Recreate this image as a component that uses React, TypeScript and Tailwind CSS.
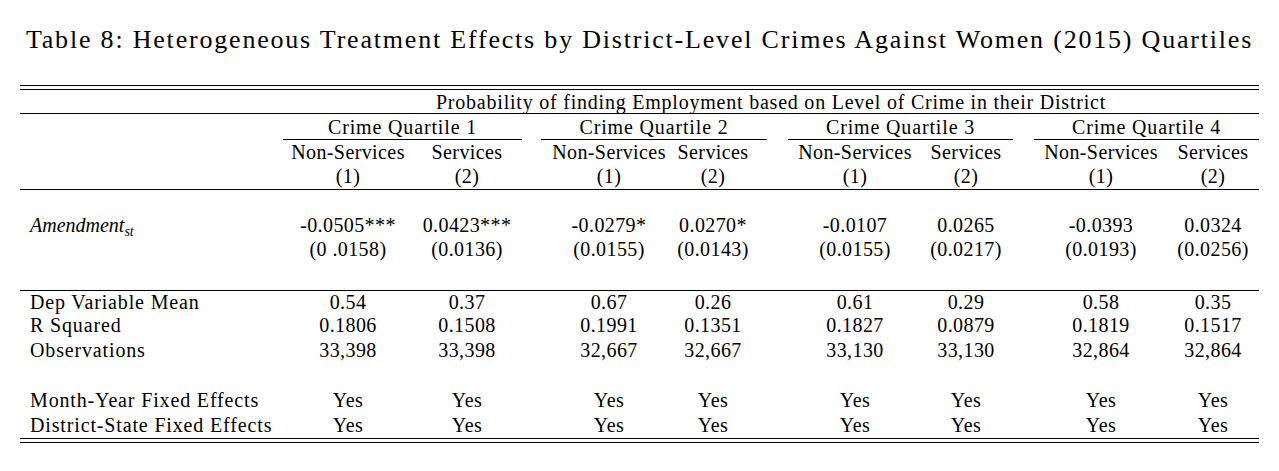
import React from "react";

const dataCols =
  "grid grid-cols-[263px_130px_108px_20px_136px_72px_39px_134px_88px_24px_134px_90px] items-center";

function Rule() {
  return <div className="h-px bg-black" />;
}

function Row({ label, values, className }: { label: React.ReactNode; values: React.ReactNode[]; className: string }) {
  const cells: React.ReactNode[] = [];
  values.forEach((v, i) => {
    cells.push(
      <div key={`v${i}`} className="text-center whitespace-nowrap">
        {v}
      </div>
    );
    if (i % 2 === 1 && i < 7) cells.push(<div key={`g${i}`} />);
  });
  return (
    <div className={`${dataCols} ${className}`}>
      <div className="pl-[10px] whitespace-nowrap tracking-[0.85px]">{label}</div>
      {cells}
    </div>
  );
}

const yes = ["Yes", "Yes", "Yes", "Yes", "Yes", "Yes", "Yes", "Yes"];

export default function App() {
  return (
    <div className="w-[1279px] h-[471px] bg-white text-black font-['Liberation_Serif','Times_New_Roman',serif] text-[20px] leading-[20px] tracking-[0.4px]">
      {/* Caption */}
      <h1 className="pt-[25px] h-[55px] text-center text-[26px] leading-[30px] tracking-[1.8px]">
        Table 8: Heterogeneous Treatment Effects by District-Level Crimes Against Women (2015) Quartiles
      </h1>

      {/* Table */}
      <div className="mx-[20px] mt-[30px]">
        <Rule />
        <div className="h-[3px]" />
        <Rule />

        <div className="grid grid-cols-[263px_1fr] h-[23px] items-center">
          <div />
          <div className="text-center whitespace-nowrap tracking-[0.78px]">
            Probability of finding Employment based on Level of Crime in their District
          </div>
        </div>
        <Rule />

        <div className="grid grid-cols-[263px_239px_19px_226px_21px_225px_21px_225px] h-[26px] tracking-[0.85px]">
          <div />
          <div className="flex items-center justify-center border-b border-black">Crime Quartile 1</div>
          <div />
          <div className="flex items-center justify-center border-b border-black">Crime Quartile 2</div>
          <div />
          <div className="flex items-center justify-center border-b border-black">Crime Quartile 3</div>
          <div />
          <div className="flex items-center justify-center border-b border-black">Crime Quartile 4</div>
        </div>

        <Row
          className="h-[23px]"
          label=""
          values={["Non-Services", "Services", "Non-Services", "Services", "Non-Services", "Services", "Non-Services", "Services"]}
        />
        <Row className="h-[26px]" label="" values={["(1)", "(2)", "(1)", "(2)", "(1)", "(2)", "(1)", "(2)"]} />
        <Rule />

        <div className="h-[23px]" />
        <Row
          className="h-[24px]"
          label={
            <span className="italic tracking-normal">
              Amendment<sub className="text-[14px]">st</sub>
            </span>
          }
          values={["-0.0505***", "0.0423***", "-0.0279*", "0.0270*", "-0.0107", "0.0265", "-0.0393", "0.0324"]}
        />
        <Row
          className="h-[24px]"
          label=""
          values={["(0 .0158)", "(0.0136)", "(0.0155)", "(0.0143)", "(0.0155)", "(0.0217)", "(0.0193)", "(0.0256)"]}
        />
        <div className="h-[29px]" />
        <Rule />

        <Row className="h-[21px]" label="Dep Variable Mean" values={["0.54", "0.37", "0.67", "0.26", "0.61", "0.29", "0.58", "0.35"]} />
        <Row
          className="h-[25px]"
          label="R Squared"
          values={["0.1806", "0.1508", "0.1991", "0.1351", "0.1827", "0.0879", "0.1819", "0.1517"]}
        />
        <Row
          className="h-[25px]"
          label="Observations"
          values={["33,398", "33,398", "32,667", "32,667", "33,130", "33,130", "32,864", "32,864"]}
        />
        <div className="h-[25px]" />
        <Row className="h-[25px]" label="Month-Year Fixed Effects" values={yes} />
        <Row className="h-[25px]" label="District-State Fixed Effects" values={yes} />

        <div className="h-px" />
        <Rule />
        <div className="h-[3px]" />
        <Rule />
      </div>
    </div>
  );
}
